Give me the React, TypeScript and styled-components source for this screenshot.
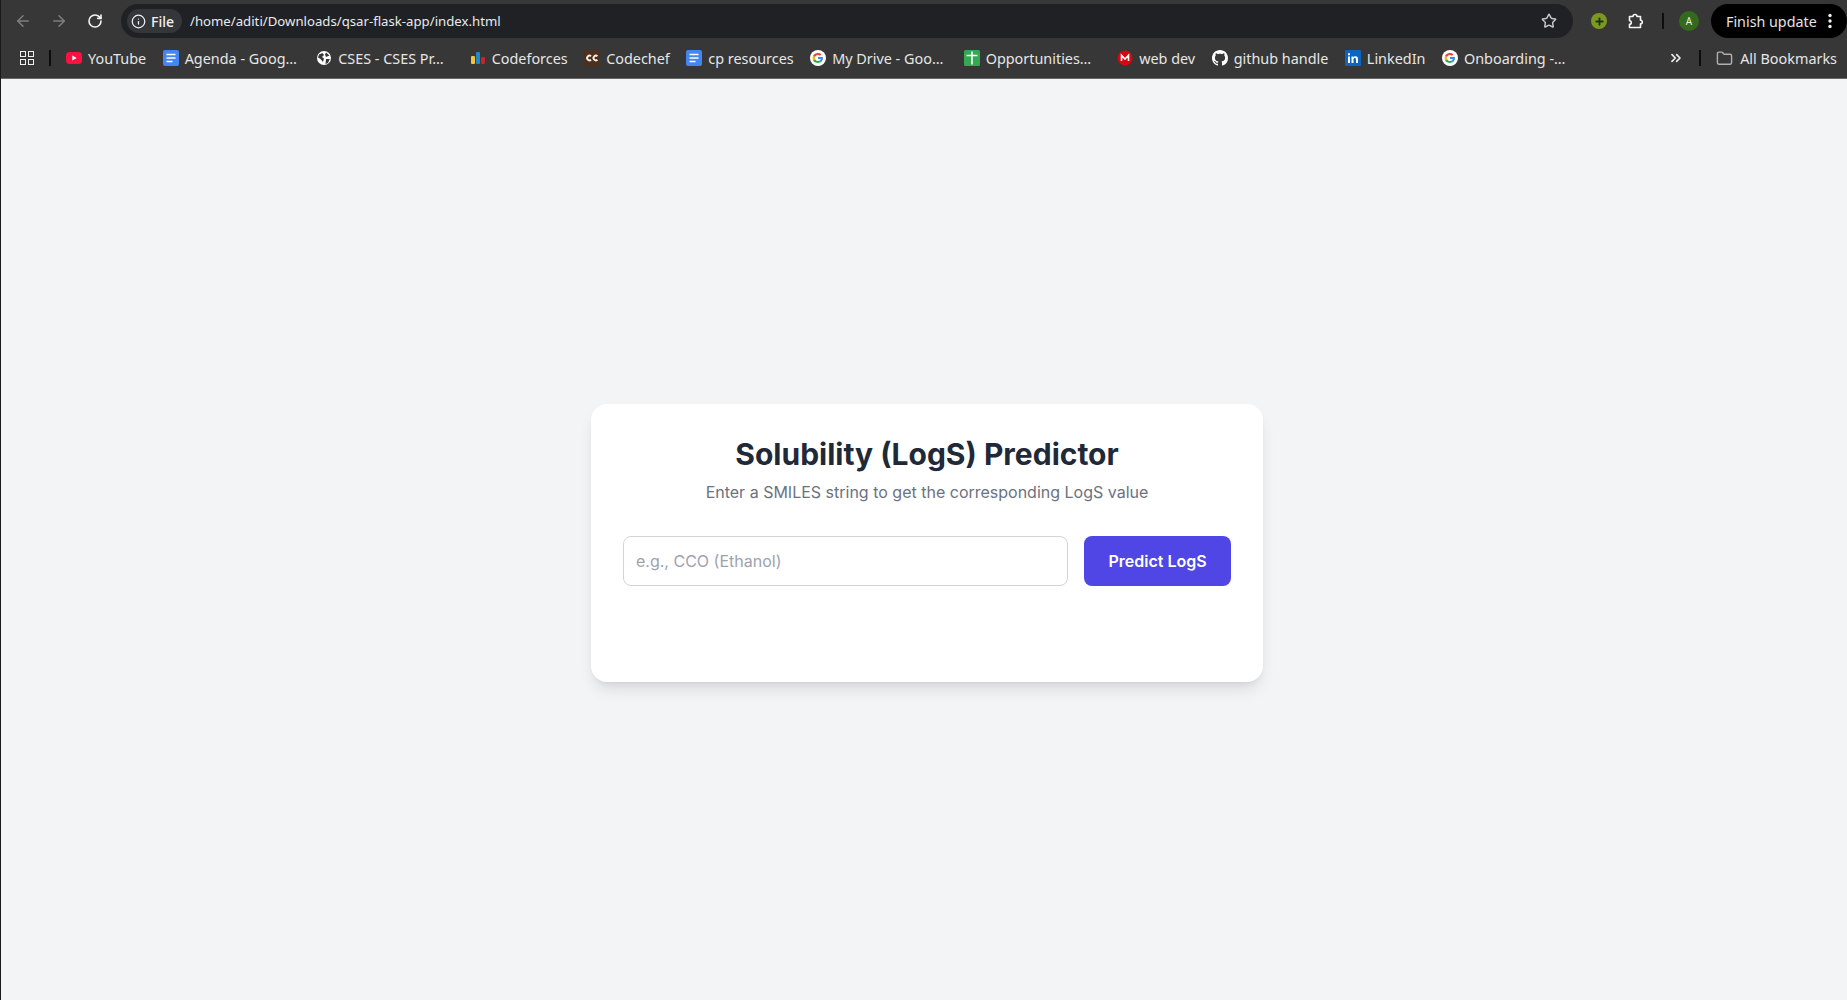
import React from "react";
import styled, { createGlobalStyle } from "styled-components";
import { ArrowLeft, ArrowRight, RotateCw, Info, Star, Folder, ChevronsRight, Plus } from "lucide-react";

const GlobalStyle = createGlobalStyle`
  html, body { margin: 0; padding: 0; height: 100%; }
  body { background: #f3f4f6; overflow: hidden; }
  #root { height: 100%; }
  * { box-sizing: border-box; }
`;

const DocIcon = ({ color = "#4285f4" }: { color?: string }) => (
  <svg width="16" height="16" viewBox="0 0 16 16">
    <rect width="16" height="16" rx="2" fill={color} />
    <path d="M3.5 4.5h9M3.5 8h9M3.5 11.5h6" stroke="#fff" strokeWidth="1.6" />
  </svg>
);

const YoutubeIcon = () => (
  <svg width="16" height="16" viewBox="0 0 16 16">
    <rect y="2" width="16" height="12" rx="3.5" fill="#f9123f" />
    <path d="M6.3 5.4 10.7 8l-4.4 2.6z" fill="#fff" />
  </svg>
);

const GlobeIcon = () => (
  <svg width="16" height="16" viewBox="0 0 16 16">
    <circle cx="8" cy="8" r="7" fill="#fff" />
    <path d="M3 4.500 6.500 3 8 5 6 7l2 1.500L7 12 4.500 9 2 7.500zM10 2.500l3.500 3L10 7 9 4.500zM10 9l3.800 0L12 13l-2.500 1z" fill="#383838" />
  </svg>
);

const BarsIcon = () => (
  <svg width="16" height="16" viewBox="0 0 16 16">
    <rect x="1" y="6" width="4" height="8" rx="1" fill="#f5c33b" />
    <rect x="6" y="2" width="4" height="12" rx="1" fill="#1f8acb" />
    <rect x="11" y="7" width="4" height="7" rx="1" fill="#c4252b" />
  </svg>
);

const ChefIcon = () => (
  <svg width="16" height="16" viewBox="0 0 16 16">
    <rect width="16" height="16" fill="#4d2f1e" />
    <path d="M7 6.300A2.300 2.300 0 1 0 7 9.700M13.400 6.300a2.300 2.300 0 1 0 0 3.400" fill="none" stroke="#f6eee4" strokeWidth="1.900" />
  </svg>
);

const GoogleIcon = () => (
  <svg width="16" height="16" viewBox="0 0 16 16">
    <circle cx="8" cy="8" r="8" fill="#fff" />
    <path d="M12.900 8.100c0-.4 0-.7-.1-1H8v2h2.800c-.1.700-.5 1.200-1 1.600l1.600 1.200c.9-.9 1.500-2.200 1.500-3.800z" fill="#4285f4" />
    <path d="M8 13c1.400 0 2.500-.5 3.400-1.200l-1.600-1.200c-.5.300-1.100.5-1.800.5-1.300 0-2.500-.9-2.900-2.100L3 10.200C3.800 11.900 5.800 13 8 13z" fill="#34a853" />
    <path d="M5.100 9A3 3 0 0 1 5.100 7L3 5.800a5.200 5.200 0 0 0 0 4.400z" fill="#fbbc05" />
    <path d="M8 4.900c.8 0 1.400.3 1.900.8l1.500-1.500C10.500 3.500 9.400 3 8 3 5.800 3 3.800 4.100 3 5.800L5.100 7C5.500 5.800 6.700 4.900 8 4.900z" fill="#ea4335" />
  </svg>
);

const SheetIcon = () => (
  <svg width="16" height="16" viewBox="0 0 16 16">
    <rect width="16" height="16" rx="1.500" fill="#34a853" />
    <path d="M2.500 5.500h11M8 1.500v13" stroke="#fff" strokeWidth="1.500" />
  </svg>
);

const MegaIcon = () => (
  <svg width="16" height="16" viewBox="0 0 16 16">
    <circle cx="8" cy="8" r="7.500" fill="#d9050f" />
    <path d="M4.500 11V5.200L8 9l3.500-3.800V11" fill="none" stroke="#fff" strokeWidth="1.600" />
  </svg>
);

const GithubIcon = () => (
  <svg width="16" height="16" viewBox="0 0 16 16" fill="#fff">
    <path d="M8 0C3.580 0 0 3.580 0 8c0 3.540 2.290 6.530 5.470 7.590.4.070.55-.17.55-.38 0-.19-.01-.82-.01-1.490-2.010.37-2.530-.49-2.690-.94-.09-.23-.48-.94-.82-1.130-.28-.15-.68-.52-.01-.53.63-.01 1.080.58 1.230.82.720 1.210 1.870.87 2.330.66.070-.52.280-.87.510-1.070-1.780-.2-3.640-.89-3.640-3.950 0-.87.310-1.590.820-2.150-.08-.2-.36-1.020.08-2.120 0 0 .67-.21 2.200.82.640-.18 1.320-.27 2-.27s1.360.09 2 .27c1.530-1.040 2.200-.82 2.200-.82.440 1.100.160 1.920.08 2.120.51.560.82 1.270.82 2.150 0 3.070-1.870 3.750-3.650 3.950.29.250.54.730.54 1.480 0 1.070-.01 1.930-.01 2.200 0 .21.150.46.550.38A8.010 8.010 0 0 0 16 8c0-4.420-3.580-8-8-8z" />
  </svg>
);

const LinkedinIcon = () => (
  <svg width="16" height="16" viewBox="0 0 16 16">
    <rect width="16" height="16" rx="1" fill="#0a66c2" />
    <path d="M3 6.500h2V13H3zM3 3.200h2v2H3zM6.500 6.500h1.900v.9c.4-.7 1.100-1.100 2-1.100 1.800 0 2.600 1.100 2.600 3V13h-2V9.700c0-1-.3-1.600-1.200-1.600-1 0-1.300.7-1.300 1.600V13h-2z" fill="#fff" />
  </svg>
);

const ExtensionIcon = () => (
  <svg width="16" height="16" viewBox="0 0 16 16" fill="none" stroke="#f4f4f4" strokeWidth="1.600" strokeLinejoin="round">
    <path d="M1.500 3.500H5a2 2 0 0 1 4 0h3.500v3.700a1.800 1.800 0 0 1 0 3.600v3.700h-11v-3.200a1.800 1.800 0 0 0 0-3.600z" />
  </svg>
);

const KebabIcon = () => (
  <svg width="16" height="16" viewBox="0 0 16 16" fill="#f0f0f0">
    <circle cx="8" cy="2.500" r="1.700" />
    <circle cx="8" cy="8" r="1.700" />
    <circle cx="8" cy="13.500" r="1.700" />
  </svg>
);

const bookmarks: { icon: React.ReactNode; label: string; clipped?: boolean }[] = [
  { icon: <YoutubeIcon />, label: "YouTube" },
  { icon: <DocIcon />, label: "Agenda - Goog…", clipped: true },
  { icon: <GlobeIcon />, label: "CSES - CSES Pr…", clipped: true },
  { icon: <BarsIcon />, label: "Codeforces" },
  { icon: <ChefIcon />, label: "Codechef" },
  { icon: <DocIcon />, label: "cp resources" },
  { icon: <GoogleIcon />, label: "My Drive - Goo…", clipped: true },
  { icon: <SheetIcon />, label: "Opportunities…", clipped: true },
  { icon: <MegaIcon />, label: "web dev" },
  { icon: <GithubIcon />, label: "github handle" },
  { icon: <LinkedinIcon />, label: "LinkedIn" },
  { icon: <GoogleIcon />, label: "Onboarding -…", clipped: true },
];

const App = () => {
  return (
    <>
      <GlobalStyle />
      <Page>
        <Chrome>
          <Toolbar>
            <NavButton $dim><ArrowLeft size={18} /></NavButton>
            <NavButton $dim><ArrowRight size={18} /></NavButton>
            <NavButton><RotateCw size={16} strokeWidth={2.4} /></NavButton>
            <AddressBar>
              <FileChip><Info size={15} />File</FileChip>
              <Url>/home/aditi/Downloads/qsar-flask-app/index.html</Url>
              <StarWrap><Star size={16} strokeWidth={2.2} /></StarWrap>
            </AddressBar>
            <AddonDot><Plus size={11} strokeWidth={4} /></AddonDot>
            <PuzzleWrap><ExtensionIcon /></PuzzleWrap>
            <Divider />
            <Avatar>A</Avatar>
            <UpdatePill>Finish update<KebabIcon /></UpdatePill>
          </Toolbar>
          <BookmarkBar>
            <AppsGrid>
              <AppCell /><AppCell /><AppCell /><AppCell />
            </AppsGrid>
            <BarDivider />
            <BookmarkList>
              {bookmarks.map((b) => (
                <Bookmark key={b.label}>
                  {b.icon}
                  <BookmarkLabel $clipped={b.clipped}>{b.label}</BookmarkLabel>
                </Bookmark>
              ))}
            </BookmarkList>
            <More><ChevronsRight size={16} strokeWidth={2.6} /></More>
            <BarDivider />
            <AllBookmarks><Folder size={17} />All Bookmarks</AllBookmarks>
          </BookmarkBar>
        </Chrome>
        <Main>
          <Card>
            <Title>Solubility (LogS) Predictor</Title>
            <Subtitle>Enter a SMILES string to get the corresponding LogS value</Subtitle>
            <Form>
              <SmilesInput placeholder="e.g., CCO (Ethanol)" />
              <PredictButton>Predict LogS</PredictButton>
            </Form>
            <Result />
          </Card>
        </Main>
      </Page>
    </>
  );
};

const Page = styled.div`
  height: 100vh;
  display: flex;
  flex-direction: column;
  border-left: 1px solid #1a1a1a;
`;

const Chrome = styled.div`
  background: #373737;
  border-bottom: 1px solid #6a6a6a;
  flex-shrink: 0;
  color: #e6e6e6;
  font-family: "Noto Sans", sans-serif;
`;

const Toolbar = styled.div`
  height: 40px;
  display: flex;
  align-items: center;
  padding: 2px 0 0 4px;
`;

const NavButton = styled.div<{ $dim?: boolean }>`
  width: 36px;
  display: flex;
  justify-content: center;
  color: ${(p) => (p.$dim ? "#7f7f7f" : "#f4f4f4")};
`;

const AddressBar = styled.div`
  width: 1452px;
  height: 34px;
  margin-left: 8px;
  border-radius: 17px;
  background: #202124;
  display: flex;
  align-items: center;
  padding: 0 16px 0 6px;
`;

const FileChip = styled.div`
  width: 55px;
  height: 24px;
  padding-left: 4px;
  border-radius: 12px;
  background: #35363a;
  display: flex;
  align-items: center;
  gap: 5px;
  font-size: 14px;
  font-weight: 500;
  color: #f1f1f1;
`;

const Url = styled.div`
  margin-left: 8px;
  font-size: 13.2px;
  color: #e8eaed;
  flex: 1;
`;

const StarWrap = styled.div`
  display: flex;
  color: #c4c7c5;
`;

const AddonDot = styled.div`
  width: 16px;
  height: 16px;
  margin-left: 18px;
  border-radius: 50%;
  background: #7a9a1f;
  color: #22301a;
  display: flex;
  align-items: center;
  justify-content: center;
`;

const PuzzleWrap = styled.div`
  margin-left: 21px;
  display: flex;
`;

const Divider = styled.div`
  width: 2px;
  height: 16px;
  margin-left: 18px;
  background: #0d0d0d;
`;

const Avatar = styled.div`
  width: 20px;
  height: 20px;
  margin-left: 15px;
  border-radius: 50%;
  background: #34691e;
  color: #e4efdc;
  font-size: 10px;
  display: flex;
  align-items: center;
  justify-content: center;
`;

const UpdatePill = styled.div`
  height: 34px;
  margin-left: 12px;
  padding: 0 0 0 15px;
  border-radius: 17px;
  background: #000;
  color: #e4e4e4;
  font-size: 14.3px;
  display: flex;
  align-items: center;
  gap: 5px;
  flex: 1;
  white-space: nowrap;
`;

const BookmarkBar = styled.div`
  height: 38px;
  display: flex;
  align-items: center;
  padding: 0 10px 2px 19px;
`;

const AppsGrid = styled.div`
  display: grid;
  grid-template-columns: 6px 6px;
  gap: 2px;
`;

const AppCell = styled.div`
  width: 6px;
  height: 6px;
  border: 1.500px solid #f0f0f0;
`;

const BarDivider = styled.div`
  width: 2px;
  height: 16px;
  margin: 0 15px;
  background: #0d0d0d;
`;

const BookmarkList = styled.div`
  display: flex;
  align-items: center;
  gap: 16.5px;
  flex: 1;
  min-width: 0;
`;

const Bookmark = styled.div`
  display: flex;
  align-items: center;
  gap: 6px;
  font-size: 14.4px;
  white-space: nowrap;
`;

const BookmarkLabel = styled.span<{ $clipped?: boolean }>`
  ${(p) => (p.$clipped ? "width: 115px;" : "")}
`;

const More = styled.div`
  display: flex;
  color: #e8e8e8;
`;

const AllBookmarks = styled.div`
  display: flex;
  align-items: center;
  gap: 7px;
  font-size: 14.4px;
  white-space: nowrap;
  svg { color: #b0b0b0; }
`;

const Main = styled.main`
  flex: 1;
  display: flex;
  align-items: center;
  justify-content: center;
  padding: 7px 0 0 6px;
  font-family: Inter, sans-serif;
`;

const Card = styled.div`
  width: 672px;
  padding: 32px;
  background: #fff;
  border-radius: 16px;
  box-shadow: 0 10px 15px -3px rgba(0, 0, 0, 0.1), 0 4px 6px -4px rgba(0, 0, 0, 0.1);
`;

const Title = styled.h1`
  margin: 0 0 8px;
  font-size: 30px;
  line-height: 36px;
  font-weight: 700;
  color: #1f2937;
  text-align: center;
`;

const Subtitle = styled.p`
  margin: 0 0 32px;
  font-size: 16px;
  line-height: 24px;
  color: #6b7280;
  text-align: center;
`;

const Form = styled.div`
  display: flex;
  gap: 16px;
`;

const SmilesInput = styled.input`
  flex: 1;
  min-width: 0;
  height: 50px;
  padding: 12px;
  border: 1px solid #d1d5db;
  border-radius: 8px;
  font: 16px Inter, sans-serif;
  color: #1f2937;
  &::placeholder { color: #9ca3af; }
`;

const PredictButton = styled.button`
  width: 147px;
  height: 50px;
  border: none;
  border-radius: 8px;
  background: #4f46e5;
  color: #fff;
  font: 600 16px Inter, sans-serif;
`;

const Result = styled.div`
  margin-top: 32px;
  min-height: 32px;
`;

export default App;
